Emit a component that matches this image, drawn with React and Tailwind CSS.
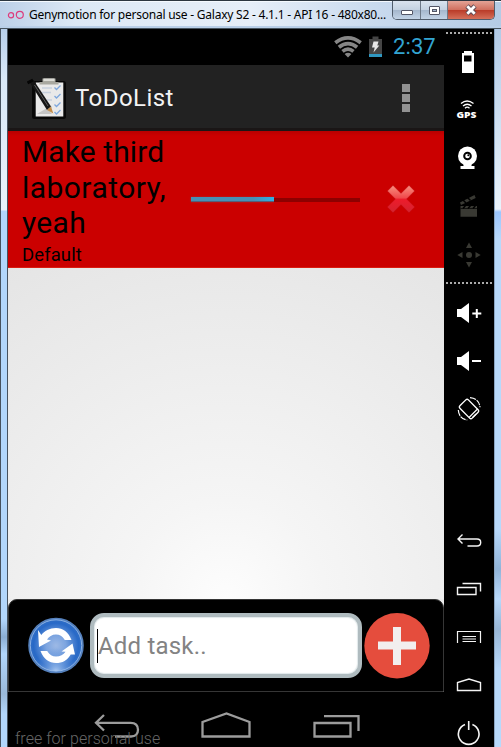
import React from "react";

const roboto = "font-['Roboto','Liberation_Sans',sans-serif]";

function TitleBar() {
  return (
    <div className="flex h-[29px] shrink-0 items-start border-b border-[#47545f] bg-[linear-gradient(90deg,#bcd0e8_0%,#dce8f5_15%,#e6eef8_50%,#c9daee_75%,#b4cbe5_100%)] shadow-[inset_0_-2px_0_#b9cfe8,inset_0_1px_0_#2c3640,inset_0_2px_0_#f4f9fe]">
      <svg className="ml-[7px] mt-[9px] h-3 w-[18px] shrink-0" viewBox="0 0 18 12" fill="none" stroke="#dd3c7d" strokeWidth="1.2">
        <circle cx="4" cy="6.3" r="2.6" />
        <circle cx="12.8" cy="5.8" r="3.5" />
      </svg>
      <div className="ml-1 mt-[5px] w-[363px] shrink-0 whitespace-nowrap font-['Noto_Sans','Open_Sans',sans-serif] text-[12px] leading-[20px] tracking-[-0.23px] text-black">
        Genymotion for personal use - Galaxy S2 - 4.1.1 - API 16 - 480x80...
      </div>
      <div className="mt-px flex h-[19px] w-[103px] overflow-hidden rounded-b-[5px] border border-t-0 border-[#505c6b]">
        <div className="flex w-[28px] items-center justify-center border-r border-[#6d7988] bg-[linear-gradient(#d9e3ef_0%,#c4d2e2_48%,#a4b6cc_50%,#c2d3e6_100%)]">
          <div className="mt-[5px] h-[5px] w-3 rounded-[1px] border border-[#535666] bg-white" />
        </div>
        <div className="flex w-[27px] items-center justify-center border-r border-[#6d7988] bg-[linear-gradient(#d9e3ef_0%,#c4d2e2_48%,#a4b6cc_50%,#c2d3e6_100%)]">
          <div className="flex h-[9px] w-[11px] items-center justify-center rounded-[1px] border border-[#535666] bg-white">
            <div className="h-[3px] w-[5px] border border-[#535666] bg-[#a4b6cc]" />
          </div>
        </div>
        <div className="flex flex-1 items-center justify-center bg-[linear-gradient(#e3a396_0%,#d0705f_48%,#b93a27_50%,#d5705a_100%)]">
          <svg width="14" height="12" viewBox="0 0 14 12">
            <path d="M3 2 11 10M11 2 3 10" stroke="#5b4852" strokeWidth="4.600" />
            <path d="M3.300 2.300 10.700 9.700M10.700 2.300 3.300 9.700" stroke="#fff" strokeWidth="2.800" />
          </svg>
        </div>
      </div>
    </div>
  );
}

function StatusBar() {
  return (
    <div className="flex h-9 shrink-0 items-center bg-black pl-[326px]">
      <svg className="h-[22px] w-[28px] shrink-0" viewBox="0 0 28 22" fill="none" stroke="#868686" strokeWidth="3.7">
        <path d="M1.300 6.800Q14-2.900 26.700 6.800" />
        <path d="M4.900 11.200Q14 4 23.100 11.200" />
        <path d="M8.500 15.400Q14 11 19.500 15.400" />
        <path d="M14 21.500 10.600 18Q14 15.500 17.400 18Z" fill="#868686" stroke="none" />
      </svg>
      <svg className="ml-[6px] h-[22px] w-[15px] shrink-0" viewBox="0 0 15 22">
        <path d="M1 3h3.500V.5h6V3H14v18H1Z" fill="#454545" />
        <path d="M1 18h13v3H1Z" fill="#3097c0" />
        <path d="M5.500 5.500h5L9.300 9.500h2L5.500 16.500 6.700 11.500H4Z" fill="#e8e8e8" />
      </svg>
      <div className={`${roboto} ml-[10px] text-[22px] leading-9 tracking-[0.1px] text-[#33a5d2]`}>2:37</div>
    </div>
  );
}

function ListIcon() {
  return (
    <svg className="h-[44px] w-[42px] shrink-0" viewBox="0 0 42 44">
      <rect x="5" y="6" width="34" height="38" rx="2.500" fill="#080808" />
      <path d="M8.700 7.500h27.600v34H8.700Z" fill="#e9e9e9" />
      <path d="M12.500 7h3V3.500h13V7h3v2.500h-19Z" fill="#a8a8a0" />
      <path d="M16.500 3.500h11v2.500h-11Z" fill="#dcdcd6" />
      <path d="M15 13h10M15 17.500h9M20 25h5M23 32h2" stroke="#c6d0dd" strokeWidth="1.500" />
      <path d="M27.500 12.500l2 2 4-4M27.500 21l2 2 4-4M27.500 29.500l2 2 4-4M27.500 37l2 2 4-4" fill="none" stroke="#7da7dd" strokeWidth="1.300" />
      <path d="M10 39 20 33 25 39Z" fill="#c5c5c5" />
      <path d="M2.500 7 6.500 5 24 31.500 20 35Z" fill="#151515" />
      <path d="M7.500 10 21 31" stroke="#5c5c5c" />
      <path d="M20 35 24 31.500 26.300 38.500Z" fill="#c28d4b" />
      <path d="M.5 8 6 5" stroke="#050505" strokeWidth="3" />
    </svg>
  );
}

function ActionBar() {
  return (
    <div className="flex h-[66px] shrink-0 items-center border-b-[3px] border-[#1a1616] bg-[#222] pl-[19px]">
      <ListIcon />
      <div className={`${roboto} ml-[6px] w-[327px] pt-[2px] text-[24px] leading-8 tracking-[0.450px] text-[#f3f3f3]`}>ToDoList</div>
      <div className="mt-[3px] flex flex-col gap-[2px]">
        <div className="size-2 bg-[#929292]" />
        <div className="size-2 bg-[#929292]" />
        <div className="size-2 bg-[#929292]" />
      </div>
    </div>
  );
}

function Task() {
  return (
    <div className="flex h-[137px] shrink-0 border-b border-[#d91d12] bg-[linear-gradient(#b80000,#cb0000_5px)] pl-[14px]">
      <div className={`${roboto} w-[169px] shrink-0 pt-[3px] text-black`}>
        <div className="text-[30px] leading-[35.500px]">
          <div className="tracking-[0.100px]">Make third</div>
          <div className="tracking-[0.450px]">laboratory,</div>
          <div className="tracking-[0.350px]">yeah</div>
        </div>
        <div className="mt-[2px] text-[18.500px] leading-[24px] tracking-[0.100px]">Default</div>
      </div>
      <div className="mt-[66px] flex h-[5px] w-[169px]">
        <div className="h-[5px] w-[83px] border-b border-[#565f79] bg-[linear-gradient(90deg,#4790b5_0%,#4790b5_75%,#30b0e4_100%)] shadow-[0_0_2px_#a23a42]" />
        <div className="mt-px h-1 w-[86px] bg-[#8d0000]" />
      </div>
      <svg className="ml-[26px] mt-[53px] h-[30px] w-[30px]" viewBox="0 0 30 30">
        <defs>
          <linearGradient id="cross" x1="0" y1="0" x2="0" y2="1">
            <stop offset="0" stopColor="#f89080" /><stop offset=".45" stopColor="#f04a4c" />
            <stop offset=".52" stopColor="#ed1c2b" /><stop offset="1" stopColor="#d4232f" />
          </linearGradient>
        </defs>
        <path d="M7 1.500 15 9.500 23 1.500 28.500 7 20.500 15 28.500 23 23 28.500 15 20.500 7 28.500 1.500 23 9.500 15 1.500 7Z" fill="url(#cross)" stroke="#b8202a" strokeWidth=".3" />
      </svg>
    </div>
  );
}

function RefreshIcon() {
  return (
    <svg className="mt-[17px] h-[58px] w-[58px] shrink-0" viewBox="0 0 58 58">
      <defs>
        <radialGradient id="blue" cx=".5" cy=".5" r=".52">
          <stop offset="0" stopColor="#9db9e5" /><stop offset=".35" stopColor="#7da5e0" />
          <stop offset=".8" stopColor="#2869c7" /><stop offset="1" stopColor="#3672c5" />
        </radialGradient>
        <radialGradient id="glow" cx=".5" cy="1" r=".45">
          <stop offset="0" stopColor="#a9c8f1" /><stop offset="1" stopColor="#4d85d5" stopOpacity="0" />
        </radialGradient>
      </defs>
      <circle cx="29" cy="28.500" r="27" fill="url(#blue)" stroke="#5580bb" strokeWidth="1.600" />
      <circle cx="29" cy="28.500" r="25.700" fill="url(#glow)" stroke="#a3c1e9" strokeWidth=".8" />
      <path d="M44.500 23C41.500 15 36 11 29 11C22.500 11 17.500 14 14.300 18L11 13 12 30 24 23.500 20 22.500C22 19.500 25 17.500 29 17.500C32.500 17.500 35.500 19 37.800 23Z" fill="#fff" />
      <path d="M13.500 34C16.500 42 22 46 29 46C35.500 46 40.500 43.500 43.700 37.500L48 37.500 45.500 26.500 34.500 34.500 38.500 34.700C36.500 37.500 33 39.500 29 39.500C25.500 39.500 22.500 38 20.200 34Z" fill="#fff" />
    </svg>
  );
}

function AddBar() {
  return (
    <div className="h-[93px] shrink-0 bg-[#eaeaea]">
      <div className="flex h-full items-start rounded-t-[9px] border border-[#363636] bg-black pl-[18px]">
        <RefreshIcon />
        <div className="ml-[5px] mt-[13px] flex h-[65px] w-[272px] shrink-0 items-center rounded-[14px] border-4 border-[#afbbbf] bg-white pl-[3px] shadow-[inset_0_0_1px_1px_#e0e8ea]">
          <div className="h-[34px] w-px bg-black" />
          <div className={`${roboto} text-[24px] leading-8 tracking-[0.200px] text-[#838383]`}>Add task..</div>
        </div>
        <svg className="ml-[2px] mt-[13px] h-[66px] w-[66px] shrink-0" viewBox="0 0 66 66">
          <circle cx="33" cy="32.700" r="32.700" fill="#e54d3d" />
          <path d="M29 14h8v14.500h15v8H37v15.500h-8V36.500H14v-8h15Z" fill="#f2eeee" />
        </svg>
      </div>
    </div>
  );
}

function NavBar() {
  return (
    <div className="relative h-[55px] shrink-0 overflow-hidden bg-black">
      <div className="flex pl-[86px] pt-[20px]">
        <svg className="h-7 w-[46px]" viewBox="0 0 46 28" fill="none" stroke="#9c9c9c" strokeWidth="2.300">
          <path d="M10 3 2 10.800l8 7.700M2 10.800h34.500q7.500 0 7.500 7t-7.500 6.700H21" />
        </svg>
        <svg className="ml-[61px] h-7 w-[51px]" viewBox="0 0 51 28" fill="none" stroke="#9c9c9c" strokeWidth="2.300">
          <path d="M1.500 24.500V10L25.500 1.500 48.500 10v14.500Z" />
        </svg>
        <svg className="ml-[61px] h-7 w-[48px]" viewBox="0 0 48 28" fill="none" stroke="#9c9c9c" strokeWidth="2.300">
          <path d="M1.500 11h36v13.500h-36ZM11 4.200h34.500V19" />
        </svg>
      </div>
      <div className={`${roboto} absolute left-[7px] top-[37px] whitespace-nowrap text-[16px] font-light leading-5 tracking-[0.050px] text-[#666]`}>free for personal use</div>
    </div>
  );
}

const tools = [
  <path fill="#fff" fillRule="evenodd" d="M13-11h8v2h2v20H11V-9h2ZM13-6.500v6h7.500v-6Z" />,
  <>
    <path d="M10-6.500Q16-11.500 22.500-6.500M12-4Q16.200-7.500 20.500-4M14-1.700Q16.200-4 18.500-1.700" fill="none" stroke="#fff" strokeWidth="1.300" />
    <text x="5.500" y="8" textLength="20" lengthAdjust="spacingAndGlyphs" fill="#fff" className="font-['Open_Sans',sans-serif] text-[9.500px] font-extrabold">GPS</text>
  </>,
  <>
    <circle cx="16.500" cy="-2" r="9.500" fill="#fff" />
    <circle cx="16.500" cy="-2" r="4.300" fill="#000" />
    <circle cx="16.500" cy="-2" r="2.300" fill="#fff" />
    <circle cx="17.300" cy="-2.800" r="1" fill="#000" />
    <path d="M12.500 6h8v2h3v3h-14V8h3Z" fill="#fff" />
  </>,
  <g fill="#393933">
    <path d="M9.500 0h16.500v10.700H9.500ZM9-3.500 23.500-11l1.200 3L10-1Z" />
    <path d="M9.500 2.500h16.500" stroke="#000" strokeWidth=".7" />
    <path d="M12 2.500l2.500-3M17 2.500l2.500-3M22 2.500l2.500-3M12-6l3 3M16.500-8.500l3 3" stroke="#000" strokeWidth="1.500" />
  </g>,
  <g fill="#393933">
    <circle cx="18" cy="1" r="3" />
    <path d="M15-6h6l-3-5.500ZM15 8h6l-3 5.500ZM11.500-2v6L6.300 1ZM24.500-2v6l5.200-3Z" />
  </g>,
];

const actions = [
  <><path d="M6-4h4l8-6V10l-8-6H6Z" fill="#fff" /><path d="M21.300.500h9M25.800-4v9" stroke="#fff" strokeWidth="2" /></>,
  <><path d="M6-4h4l8-6V10l-8-6H6Z" fill="#fff" /><path d="M21 0h9" stroke="#fff" strokeWidth="2" /></>,
  <g fill="none" stroke="#fff" strokeWidth="1.400">
    <rect x="12" y="-8.700" width="12" height="17.400" rx="1.800" transform="rotate(-45 18 0)" />
    <path d="M18 8.500 26.500 0M21.500 8.500l3.500-3.500" strokeWidth="1.200" />
    <path d="M19-11.300Q28-10.500 29-1.700M7.300 1Q8 10 16.300 11" strokeWidth="1.200" strokeDasharray="6 1" />
  </g>,
];

const keys = [
  <path d="M11.500-6.500 7-2l4.500 4.500M7-2H26q3.700 0 3.700 3.500T26 5H16.500" />,
  <path d="M6.500-1.500H25v7H6.500ZM11.500-5.500h18V2.500" />,
  <path d="M6.500 6V-5.500h23V6M11.500-.5H25M11.500 2H25M11.500 4.500H25" strokeWidth="1.200" />,
  <path d="M6.500 5.500V-2.500L18-6 29.500-2.500v8Z" />,
  <path d="M14-8.500A10.300 10.300 0 1 0 21.400-8.500M17.700-12v9" strokeWidth="1.600" />,
];

function DottedRule() {
  return <div className="-ml-[5px] h-[2px] w-[47px] shrink-0 bg-[repeating-linear-gradient(90deg,#aaa_0_2px,#000_2px_4px)]" />;
}

function Sidebar() {
  return (
    <div className="flex w-[50px] shrink-0 flex-col overflow-hidden bg-black pl-[7px] pt-[3px]">
      <DottedRule />
      <div className="my-1 shrink-0">
        {tools.map((icon, i) => (
          <svg key={i} className="block h-12 w-9" viewBox="0 -24 36 48">{icon}</svg>
        ))}
      </div>
      <DottedRule />
      <div className="mt-[5px] shrink-0">
        {actions.map((icon, i) => (
          <svg key={i} className="block h-12 w-9" viewBox="0 -24 36 48">{icon}</svg>
        ))}
      </div>
      <div className="mt-[84px] shrink-0">
        {keys.map((icon, i) => (
          <svg key={i} className="block h-12 w-9" viewBox="0 -24 36 48" fill="none" stroke="#f4f4f4" strokeWidth="1.400">{icon}</svg>
        ))}
      </div>
    </div>
  );
}

export default function App() {
  return (
    <div className="flex h-[747px] w-[501px] flex-col overflow-hidden bg-[#b9d5f3]">
      <TitleBar />
      <div className="flex h-[718px]">
        <div className="w-2 shrink-0 border-l border-r border-[#46515e] bg-[linear-gradient(#b7cfeb_0px,#d9e8f7_50px,#e9f2fb_181px,#b2d6fb_182px,#b2d6fb_590px,#8badd3_608px,#b2d6fb_625px,#9ab9d9_665px,#b2d6fb_685px)]" />
        <div className="flex w-[436px] shrink-0 flex-col">
          <StatusBar />
          <ActionBar />
          <Task />
          <div className="h-[331px] shrink-0 bg-[radial-gradient(circle_at_50%_100%,#fdfdfd_0%,#f5f5f5_25%,#e5e5e5_100%)]" />
          <AddBar />
          <NavBar />
        </div>
        <Sidebar />
        <div className="w-[7px] shrink-0 border-l border-[#8ba6c3] bg-[linear-gradient(#b2cbe7_0px,#deebf8_140px,#eaf3fc_180px,#9bc6ff_183px,#b8d9fb_210px,#b8d9fb_500px,#91b4d9_540px,#b8d9fb_570px,#98b6d6_600px,#b8d9fb_640px)]" />
      </div>
    </div>
  );
}
